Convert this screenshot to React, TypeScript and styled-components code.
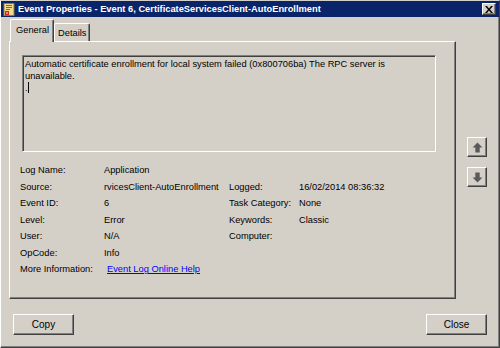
import React from "react";
import styled, { createGlobalStyle } from "styled-components";

const Global = createGlobalStyle`
  html, body { margin: 0; padding: 0; background: #d4d0c8; }
  body { font-family: "Liberation Sans", Arial, sans-serif; font-size: 9.3px; color: #000; }
  * { box-sizing: border-box; }
`;

const Window = styled.div`
  width: 500px;
  height: 348px;
  background: #d4d0c8;
  border-top: 1px solid #d4d0c8;
  border-left: 1px solid #ffffff;
  border-right: 1px solid #404040;
  border-bottom: 1px solid #404040;
  box-shadow: inset -1px -1px 0 #808080;
  display: flex;
  flex-direction: column;
`;

const TitleBar = styled.div`
  height: 16px;
  background: #0a246a;
  display: flex;
  align-items: center;
  padding: 0 3px 0 2px;
  color: #fff;
`;

const TitleText = styled.div`
  flex: 1;
  margin-left: 3px;
  font-weight: bold;
  font-size: 9.3px;
  white-space: nowrap;
`;

const CloseBox = styled.div`
  width: 14px;
  height: 12px;
  background: #d4d0c8;
  border-top: 1px solid #fff;
  border-left: 1px solid #fff;
  border-right: 1px solid #404040;
  border-bottom: 1px solid #404040;
  box-shadow: inset -1px -1px 0 #808080;
  display: flex;
  align-items: center;
  justify-content: center;
`;

const Content = styled.div`
  flex: 1;
  display: flex;
  flex-direction: column;
  padding: 2px 12px 0 8px;
`;

const TopArea = styled.div`
  display: flex;
`;

const TabsBlock = styled.div`
  width: 447px;
  display: flex;
  flex-direction: column;
`;

const TabRow = styled.div`
  display: flex;
  align-items: flex-end;
  height: 22px;
  padding-left: 1px;
  position: relative;
  z-index: 1;
`;

const Tab = styled.div<{ $active?: boolean }>`
  height: ${(p) => (p.$active ? 23 : 18)}px;
  padding: 0 ${(p) => (p.$active ? 4 : 2)}px 0 ${(p) => (p.$active ? 5 : 3)}px;
  margin-bottom: ${(p) => (p.$active ? -1 : 0)}px;
  background: #d4d0c8;
  border-top: 1px solid #fff;
  border-left: 1px solid #fff;
  border-right: 1px solid #404040;
  box-shadow: inset -1px 0 0 #808080;
  border-radius: 2px 2px 0 0;
  display: flex;
  align-items: center;
  padding-bottom: ${(p) => (p.$active ? 2 : 0)}px;
`;

const Panel = styled.div`
  height: 258px;
  border-top: 1px solid #fff;
  border-left: 1px solid #fff;
  border-right: 1px solid #404040;
  border-bottom: 1px solid #404040;
  box-shadow: inset -1px -1px 0 #808080;
  padding: 13px 19px 0 12px;
  display: flex;
  flex-direction: column;
`;

const MessageBox = styled.div`
  height: 97px;
  border-top: 1px solid #808080;
  border-left: 1px solid #808080;
  border-right: 1px solid #fff;
  border-bottom: 1px solid #fff;
  box-shadow: inset 1px 1px 0 #404040;
  padding: 2px 2px;
  line-height: 12px;
`;

const Caret = styled.span`
  display: inline-block;
  width: 1px;
  height: 11px;
  background: #000;
  vertical-align: -2px;
`;

const InfoGrid = styled.div`
  margin-top: 10px;
  margin-left: -2px;
  display: grid;
  grid-template-columns: 84px 125px 70px 1fr;
  grid-auto-rows: 16.5px;
  align-items: center;
`;

const Cell = styled.div`
  white-space: nowrap;
  overflow: hidden;
`;

const Link = styled.a`
  color: #0000ff;
  text-decoration: underline;
  margin-left: 3px;
  white-space: nowrap;
  cursor: pointer;
`;

const Side = styled.div`
  width: 20px;
  margin-left: 11px;
  padding-top: 118px;
  display: flex;
  flex-direction: column;
  gap: 10px;
`;

const ArrowButton = styled.div`
  width: 20px;
  height: 20px;
  background: #d4d0c8;
  border-top: 1px solid #fff;
  border-left: 1px solid #fff;
  border-right: 1px solid #404040;
  border-bottom: 1px solid #404040;
  box-shadow: inset -1px -1px 0 #808080;
  display: flex;
  align-items: center;
  justify-content: center;
`;

const Footer = styled.div`
  margin-top: 15px;
  padding-left: 4px;
  display: flex;
  justify-content: space-between;
`;

const Button = styled.div`
  width: 61px;
  height: 21px;
  background: #d4d0c8;
  border-top: 1px solid #fff;
  border-left: 1px solid #fff;
  border-right: 1px solid #404040;
  border-bottom: 1px solid #404040;
  box-shadow: inset -1px -1px 0 #808080;
  display: flex;
  align-items: center;
  justify-content: center;
  font-size: 10px;
`;

const AppIcon = () => (
  <svg width="12" height="13" viewBox="0 0 12 13">
    <rect x="1" y="0.5" width="10" height="12" fill="#f2dc8c" stroke="#8c7a3c" />
    <rect x="3" y="2" width="6" height="1" fill="#4a6fb0" />
    <rect x="3" y="4" width="6" height="1" fill="#4a6fb0" />
    <rect x="3" y="6" width="4" height="1" fill="#4a6fb0" />
    <rect x="2" y="8" width="4" height="4" fill="#d42020" />
    <rect x="3" y="9" width="2" height="2" fill="#ff8080" />
  </svg>
);

const XIcon = () => (
  <svg width="8" height="7" viewBox="0 0 8 7">
    <path d="M0 0h2l2 2.5L6 0h2L5 3.5L8 7H6L4 4.5L2 7H0l3-3.5z" fill="#000" />
  </svg>
);

const UpArrow = () => (
  <svg width="11" height="11" viewBox="0 0 10 10">
    <path d="M5 0.5L9.5 5H7v4.5H3V5H0.5z" fill="#5a5a5a" />
  </svg>
);

const DownArrow = () => (
  <svg width="11" height="11" viewBox="0 0 10 10">
    <path d="M5 9.5L9.5 5H7V0.5H3V5H0.5z" fill="#5a5a5a" />
  </svg>
);

const rows: [string, string, string, string][] = [
  ["Log Name:", "Application", "", ""],
  ["Source:", "rvicesClient-AutoEnrollment", "Logged:", "16/02/2014 08:36:32"],
  ["Event ID:", "6", "Task Category:", "None"],
  ["Level:", "Error", "Keywords:", "Classic"],
  ["User:", "N/A", "Computer:", ""],
  ["OpCode:", "Info", "", ""],
];

export default function App() {
  return (
    <>
      <Global />
      <Window>
        <TitleBar>
          <AppIcon />
          <TitleText>Event Properties - Event 6, CertificateServicesClient-AutoEnrollment</TitleText>
          <CloseBox>
            <XIcon />
          </CloseBox>
        </TitleBar>
        <Content>
          <TopArea>
            <TabsBlock>
              <TabRow>
                <Tab $active>General</Tab>
                <Tab>Details</Tab>
              </TabRow>
              <Panel>
                <MessageBox>
                  Automatic certificate enrollment for local system failed (0x800706ba) The RPC server is
                  <br />
                  unavailable.
                  <br />
                  .<Caret />
                </MessageBox>
                <InfoGrid>
                  {rows.map((r, i) => (
                    <React.Fragment key={i}>
                      <Cell>{r[0]}</Cell>
                      <Cell>{r[1]}</Cell>
                      <Cell>{r[2]}</Cell>
                      <Cell>{r[3]}</Cell>
                    </React.Fragment>
                  ))}
                  <Cell>More Information:</Cell>
                  <Cell>
                    <Link>Event Log Online Help</Link>
                  </Cell>
                  <Cell />
                  <Cell />
                </InfoGrid>
              </Panel>
            </TabsBlock>
            <Side>
              <ArrowButton>
                <UpArrow />
              </ArrowButton>
              <ArrowButton>
                <DownArrow />
              </ArrowButton>
            </Side>
          </TopArea>
          <Footer>
            <Button>Copy</Button>
            <Button>Close</Button>
          </Footer>
        </Content>
      </Window>
    </>
  );
}
